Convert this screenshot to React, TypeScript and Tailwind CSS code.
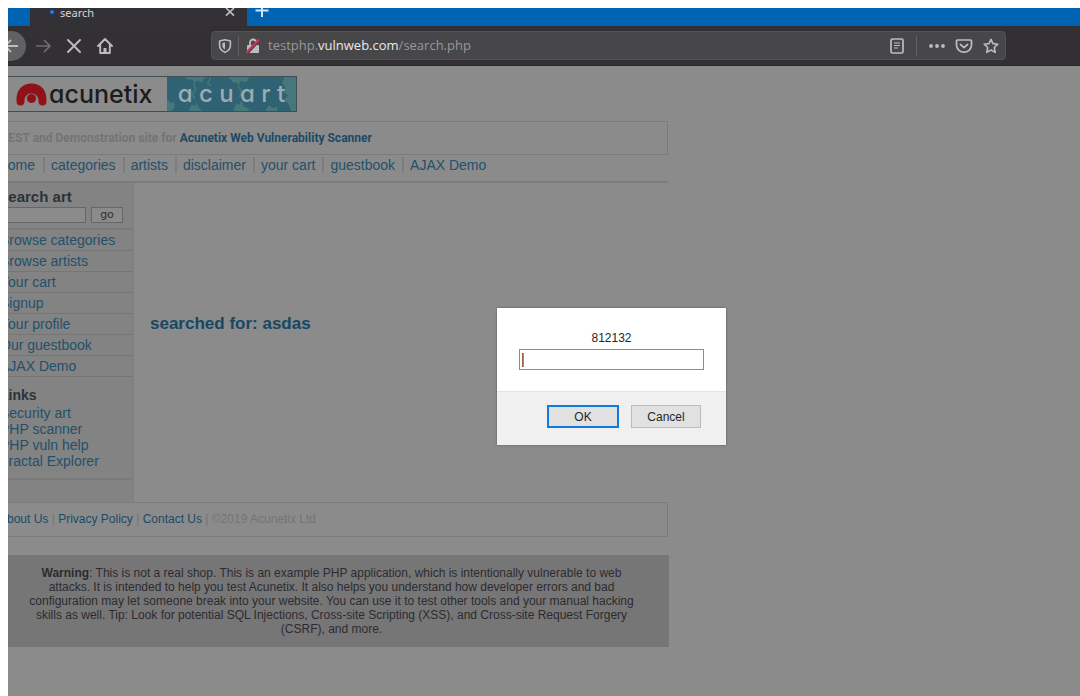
import React from "react";

const navItems = ["home", "categories", "artists", "disclaimer", "your cart", "guestbook", "AJAX Demo"];
const sideItems = ["Browse categories", "Browse artists", "Your cart", "Signup", "Your profile", "Our guestbook", "AJAX Demo"];
const sideLinks = ["Security art", "PHP scanner", "PHP vuln help", "Fractal Explorer"];

function TabStrip() {
  return (
    <div className="flex h-[18px] bg-[#0063b1]">
      <div className="ml-[22px] flex w-[217px] items-start overflow-hidden bg-[#333136] pl-5">
        <span className="mt-0.5 size-1 rounded-full bg-[#0a84ff]" />
        <span className="ml-1.5 flex-1 text-[11px] leading-[9px] text-[#d6d6d8]">search</span>
        <button aria-label="Close tab" className="mr-3 text-[#c0c0c2]">
          <svg width="10" height="10" viewBox="0 0 10 10" stroke="currentColor" strokeWidth="1.6" fill="none">
            <path d="M1 0L9 7.6M9 0L1 7.6" />
          </svg>
        </button>
      </div>
      <button aria-label="New tab" className="ml-2 h-4 text-[#d8e6f3]">
        <svg width="14" height="16" viewBox="0 0 14 16" stroke="currentColor" strokeWidth="2" fill="none">
          <path d="M0.500 2.500H13.500M7 0V9" />
        </svg>
      </button>
    </div>
  );
}

function Toolbar() {
  return (
    <div className="flex h-10 items-center border-b border-[#2a282b] bg-[#323033] text-[#bdbdbf]">
      <button aria-label="Back" className="-ml-3 flex size-[30px] shrink-0 items-center justify-center rounded-full bg-[#616163]">
        <svg width="16" height="16" viewBox="0 0 16 16" stroke="currentColor" strokeWidth="1.8" fill="none">
          <path d="M15 8H2M8 2L2 8l6 6" />
        </svg>
      </button>
      <button aria-label="Forward" className="ml-2 text-[#6d6d70]">
        <svg width="18" height="16" viewBox="0 0 18 16" stroke="currentColor" strokeWidth="1.7" fill="none">
          <path d="M2 8h14M10 2l6 6-6 6" />
        </svg>
      </button>
      <button aria-label="Stop" className="ml-3.5">
        <svg width="16" height="16" viewBox="0 0 16 16" stroke="currentColor" strokeWidth="1.9" strokeLinecap="round" fill="none">
          <path d="M2 2l12 12M14 2L2 14" />
        </svg>
      </button>
      <button aria-label="Home" className="ml-3.5">
        <svg width="18" height="18" viewBox="0 0 18 18" stroke="currentColor" strokeWidth="1.9" strokeLinejoin="round" strokeLinecap="round" fill="none">
          <path d="M2 9l7-7 7 7M4.200 8v8h9.600V8" />
          <path d="M9 15.500v-4.500" strokeWidth="3" strokeLinecap="butt" />
        </svg>
      </button>
      <div className="ml-[97px] flex h-[29px] w-[795px] items-center rounded-sm border border-[#525154] bg-[#474649] px-1.5">
        <svg className="shrink-0" width="14" height="16" viewBox="0 0 14 16" stroke="currentColor" strokeWidth="1.6" fill="none">
          <path d="M7 1.800L12.400 3v4.500c0 3-2 5.300-5.400 6.900C3.600 12.800 1.600 10.500 1.600 7.500V3z" strokeLinejoin="round" />
          <path d="M7 4.400v7.200c-1.700-1-2.600-2.400-2.600-4.200V5z" fill="currentColor" stroke="none" />
        </svg>
        <span className="ml-1.5 h-5 w-px bg-[#5f6266]" />
        <svg className="ml-1.5 shrink-0" width="16" height="16" viewBox="0 0 16 16" fill="none">
          <path d="M5 8V4.500a3 3 0 0 1 6 0V8" stroke="#bdbdbf" strokeWidth="1.8" />
          <rect x="2" y="7" width="12" height="8" rx="1" fill="#bdbdbf" />
          <path d="M2.500 15.500L15.500 1.500" stroke="#474649" strokeWidth="2" />
          <path d="M1.500 14.500L14 1.500" stroke="#e22850" strokeWidth="2.2" />
        </svg>
        <span className="ml-[7px] flex-1 font-['Open_Sans',sans-serif] text-[13px] whitespace-nowrap text-[#98989a]">
          testphp.<span className="text-[#e8e8ea]">vulnweb.com</span>/search.php
        </span>
        <button aria-label="Reader view">
          <svg width="14" height="16" viewBox="0 0 14 16" stroke="currentColor" strokeWidth="1.7" fill="none">
            <rect x="1" y="1" width="12" height="14" rx="1.500" />
            <path d="M4 5h6M4 7.500h6M4 10h4" strokeWidth="1.200" />
          </svg>
        </button>
        <span className="ml-3 h-5 w-px bg-[#5f6266]" />
        <button aria-label="Page actions" className="ml-3">
          <svg width="16" height="16" viewBox="0 0 16 16" fill="currentColor">
            <circle cx="2" cy="8" r="1.900" /><circle cx="8" cy="8" r="1.900" /><circle cx="14" cy="8" r="1.900" />
          </svg>
        </button>
        <button aria-label="Save to Pocket" className="ml-2.5">
          <svg width="18" height="16" viewBox="0 0 18 16" stroke="currentColor" strokeWidth="1.7" fill="none" strokeLinecap="round" strokeLinejoin="round">
            <path d="M2.500 2h13c.6 0 1 .4 1 1v4c0 4-3.300 7.200-7.500 7.200S1.500 11 1.500 7V3c0-.6.4-1 1-1z" />
            <path d="M5.500 6.500L9 9.700l3.500-3.200" />
          </svg>
        </button>
        <button aria-label="Bookmark this page" className="ml-2.5">
          <svg width="16" height="16" viewBox="0 0 16 16" stroke="currentColor" strokeWidth="1.600" fill="none" strokeLinejoin="round">
            <path d="M8 1.300l2 4.300 4.800.6-3.500 3.300.9 4.900L8 12l-4.200 2.400.9-4.900L1.200 6.200 6 5.600z" />
          </svg>
        </button>
      </div>
    </div>
  );
}

function Logo() {
  return (
    <a href="#" className="mt-2.5 ml-3.5 flex h-9 w-[289px] border-y border-[#3f4d54] font-['Inter',sans-serif] [font-feature-settings:'cv11'] text-[25px] leading-[34px]">
      <span className="flex w-[159px] items-center pl-2 font-medium text-[#1c1c1c]">
        <svg className="mr-0.5 shrink-0" width="31" height="24" viewBox="0 0 31 24">
          <path d="M0.500 19C0 8 6 1.500 15.500 1.500S31 8 30.500 19c0 3-1.500 4.500-4 4.500-3 0-4-2-4-4.500 0-5-3-7.500-7-7.500s-7 2.500-7 7.500c0 2.500-1 4.500-4 4.500-2.500 0-4-1.500-4-4.500z" fill="#8f1218" />
          <circle cx="15.500" cy="16.500" r="4.600" fill="#8f1218" />
        </svg>
        acunetix
      </span>
      <span className="relative flex-1 overflow-hidden border-r border-[#3f4d54] bg-[#2f6273] text-center text-2xl leading-[34px] font-medium text-[#9eabb0]">
        <svg className="absolute inset-0 size-full" viewBox="0 0 130 34" preserveAspectRatio="none" fill="#52807e" opacity="0.700">
          <path d="M18 0l4 3 3-1 3 4 3-3 4 3 2-4 4-2zM0 23l4 3 3-1 1 5-4 4H0zM22 34l3-7 3 2 2-3 3 6 3 2zM62 0l5 6 3-1 2 4 2-5 6 1 3-5zM67 34l3-8 3 2 2-5 2 6 6 3-1 2zM118 0l-2 6 3 4-2 5 5 3-4 5 4 3 3 8h5V0zM99 34l4-6 3 3 5-1v4z" />
          <path d="M27 6l2 7-4 4 3 5M72 9l3 6-2 5M44 0l-3 6 4 3" fill="none" stroke="#52807e" strokeWidth="1.5" />
        </svg>
        <span className="relative whitespace-nowrap">a c u a r t</span>
      </span>
    </a>
  );
}

function Sidebar() {
  return (
    <aside className="w-[140px] border-r-2 border-[#7f7f7f] bg-[#838383] leading-4">
      <form className="h-[45px] pt-1.5 pl-1.5" onSubmit={(e) => e.preventDefault()}>
        <label htmlFor="art" className="block text-[15px] leading-4 font-bold text-[#2b3337]">search art</label>
        <div className="mt-0.5 flex gap-[5px]">
          <input id="art" className="h-4 w-[86px] border border-[#666666] bg-[#8b8b8b] px-1" />
          <button className="h-4 w-8 border border-[#666666] bg-[#8b8b8b] font-['DejaVu_Sans',sans-serif] text-[11px] leading-3 text-[#303030]">go</button>
        </div>
      </form>
      <ul className="border-t-2 border-[#7a7a7a]">
        {sideItems.map((item) => (
          <li key={item} className="h-[21px] border-b border-[#767676] pt-0.5 pl-1.5"><a href="#">{item}</a></li>
        ))}
      </ul>
      <div className="h-[103px] border-b-2 border-[#7a7a7a] pt-2.5 pl-1.5">
        <h3 className="mb-0.5 font-bold text-[#2b3337]">Links</h3>
        <ul>
          {sideLinks.map((item) => <li key={item}><a href="#">{item}</a></li>)}
        </ul>
      </div>
      <div className="h-[22px]" />
    </aside>
  );
}

function PromptDialog() {
  return (
    <div role="dialog" aria-label="812132" className="absolute top-[308px] left-[497px] w-[229px] bg-white font-['Liberation_Sans',Arial,sans-serif] text-[12px] text-[#262626] shadow-[0_0_2px_#555555]">
      <div className="flex flex-col items-center px-[22px] pt-[22px] pb-[21px]">
        <label htmlFor="prompt" className="leading-4">812132</label>
        <input id="prompt" defaultValue="|" className="mt-[3px] h-[21px] w-full border border-[#4a9be8] bg-white px-px text-[14px] outline-none" />
      </div>
      <div className="flex gap-3 border-t border-[#e4e4e4] bg-[#f0f0f0] pt-[13px] pr-[25px] pb-[17px] pl-[50px]">
        <button className="h-[23px] flex-1 border-2 border-[#0f7bdb] bg-[#e1e1e1]">OK</button>
        <button className="h-[23px] flex-1 border border-[#bcbcbc] bg-[#e1e1e1]">Cancel</button>
      </div>
    </div>
  );
}

export default function App() {
  return (
    <div className="relative flex min-h-screen bg-white pt-2 pl-2">
      <div className="min-w-0 flex-1 overflow-hidden bg-[#8b8b8b]">
        <header className="font-['Noto_Sans','Open_Sans',sans-serif]">
          <TabStrip />
          <Toolbar />
        </header>
        <main className="-ml-3.5 w-[674px] font-['Liberation_Sans',Arial,sans-serif] text-[14px] text-[#24506a]">
          <Logo />
          <h2 className="mt-[9px] h-[34px] border border-[#7b7b7b] pl-1.5 font-['Roboto',sans-serif] text-[12px] leading-8 font-bold whitespace-nowrap text-[#747474]">
            TEST and Demonstration site for <a href="#" className="text-[#1c4a66]">Acunetix Web Vulnerability Scanner</a>
          </h2>
          <nav className="flex h-7 border-b-2 border-[#7c7c7c] pt-0.5 pl-1.5 leading-4">
            {navItems.map((item, i) => (
              <a key={item} href="#" className={i ? "h-4 border-l-2 border-[#7d7d7d] pr-[7px] pl-1.5" : "h-4 pr-2"}>{item}</a>
            ))}
          </nav>
          <div className="flex">
            <Sidebar />
            <section className="flex flex-1 items-center pb-[37px] pl-4">
              <h1 className="text-[17px] font-bold text-[#174863]">searched for: asdas</h1>
            </section>
          </div>
          <footer className="h-[35px] border border-[#7b7b7b] pl-1 text-[12px] leading-8 whitespace-nowrap text-[#747474]">
            <a href="#" className="text-[#1c4a66]">About Us</a> | <a href="#" className="text-[#1c4a66]">Privacy Policy</a> | <a href="#" className="text-[#1c4a66]">Contact Us</a> | ©2019 Acunetix Ltd
          </footer>
          <p className="mt-[18px] -mr-px bg-[#767676] py-[11px] text-center text-[12px] leading-[14px] whitespace-nowrap text-[#2d2b30]">
            <b>Warning</b>: This is not a real shop. This is an example PHP application, which is intentionally vulnerable to web<br />
            attacks. It is intended to help you test Acunetix. It also helps you understand how developer errors and bad<br />
            configuration may let someone break into your website. You can use it to test other tools and your manual hacking<br />
            skills as well. Tip: Look for potential SQL Injections, Cross-site Scripting (XSS), and Cross-site Request Forgery<br />
            (CSRF), and more.
          </p>
        </main>
      </div>
      <PromptDialog />
    </div>
  );
}
